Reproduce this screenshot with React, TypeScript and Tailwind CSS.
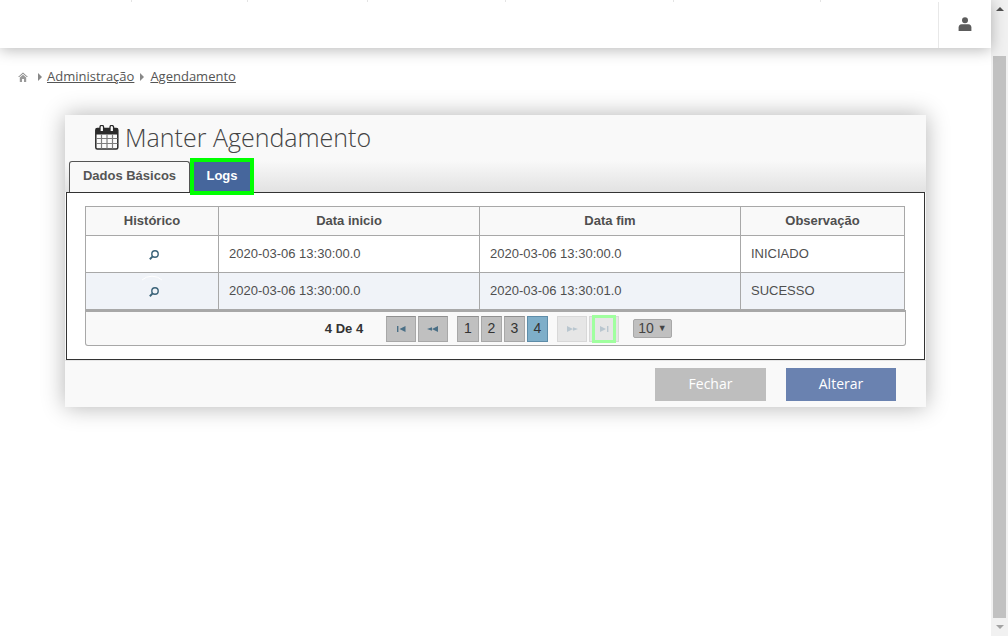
import React from "react";

const arial = "font-['Liberation_Sans',Arial,sans-serif]";
const openSans = "font-['Open_Sans',sans-serif]";

function Lens({ ring }: { ring?: boolean }) {
  return (
    <svg width="30" height="16" viewBox="0 0 30 16" className="block overflow-visible">
      {ring && <path d="M5 1 A15 15 0 0 1 25 1" transform="translate(0 -5)" fill="none" stroke="#ffffff" strokeWidth="1" />}
      <circle cx="18" cy="7" r="3.2" fill="none" stroke="#3b6379" strokeWidth="1.4" />
      <path d="M15.7 9.4 L12.8 12.2" stroke="#3b6379" strokeWidth="1.9" />
    </svg>
  );
}

function PageGlyph({ d, color }: { d: string; color: string }) {
  return (
    <svg width="14" height="8" viewBox="0 0 14 8" className="block">
      <path d={d} fill={color} />
    </svg>
  );
}

const FIRST = "M3 1h1.4v6H3zM11.5 1v6L5.5 4z";
const PREV = "M6 2.2v3.6L1 4zM12 1v6L6 4z";
const NEXT = "M2 1v6l6-3zM8 2.2v3.6L13 4z";
const LAST = "M3 1v6l6-3zM10 1h1.4v6H10z";

function Calendar() {
  return (
    <svg width="24" height="25" viewBox="0 0 24 25" className="block">
      <rect x="0.8" y="3.5" width="22" height="20.5" rx="1.5" fill="#fbfbfb" stroke="#2b2b2b" strokeWidth="1.5" />
      <rect x="1" y="3.5" width="21.6" height="6" fill="#2b2b2b" />
      <path d="M5 6V2.2a1.8 1.8 0 0 1 3.6 0V6" fill="#fbfbfb" stroke="#2b2b2b" strokeWidth="1.3" />
      <path d="M15 6V2.2a1.8 1.8 0 0 1 3.6 0V6" fill="#fbfbfb" stroke="#2b2b2b" strokeWidth="1.3" />
      <path d="M1 13.5h21.5M1 18.5h21.5" stroke="#7d7d7d" strokeWidth="1.2" />
      <path d="M6.5 9.5v14M12 9.5v14M17.5 9.5v14" stroke="#7d7d7d" strokeWidth="1.2" />
    </svg>
  );
}

function Tick({ w }: { w: string }) {
  return <div className={`${w} h-[2px] border-r border-[#e4e4e4]`} />;
}

function PagerButton({ children, w, cls }: { children: React.ReactNode; w: string; cls?: string }) {
  return (
    <div
      className={`${w} h-[26px] flex items-center justify-center border border-[#a8a8a8] border-t-[#8f8f8f] bg-[#c0c0c0] text-[14px] text-[#333] ${cls ?? ""}`}
    >
      {children}
    </div>
  );
}

function Row({ alt, start, end, obs }: { alt?: boolean; start: string; end: string; obs: string }) {
  const td = "border border-[#a8a8a8] px-[10px] pb-[1px] text-[13px] text-[#4f4f4f]";
  return (
    <tr className={`h-[37px] ${alt ? "bg-[#f0f3f8]" : "bg-white"}`}>
      <td className="border border-[#a8a8a8]">
        <div className="flex justify-center pt-[1px]">
          <Lens ring={alt} />
        </div>
      </td>
      <td className={td}>{start}</td>
      <td className={td}>{end}</td>
      <td className={td}>{obs}</td>
    </tr>
  );
}

export default function App() {
  const th = "border border-[#a8a8a8] text-[13px] font-bold text-[#4f4f4f] text-center";
  return (
    <div className="h-[636px] w-[1008px] flex overflow-hidden bg-white">
      <div className="w-[991px] flex flex-col">
        <header className="h-[48px] shrink-0 flex bg-white shadow-[0_2px_14px_rgba(0,0,0,0.28)] relative">
          <div className="flex-1 flex items-start">
            <Tick w="w-[132px]" />
            <Tick w="w-[116px]" />
            <Tick w="w-[120px]" />
            <Tick w="w-[138px]" />
            <Tick w="w-[168px]" />
            <Tick w="w-[147px]" />
          </div>
          <div className="w-[53px] mt-[2px] border-l border-[#e8e8e8] flex items-center justify-center pr-[1px] pb-[2px]">
            <svg width="14" height="14" viewBox="0 0 14 14" className="block">
              <circle cx="7" cy="3.2" r="3" fill="#5c5c5c" />
              <path d="M0.6 14v-3.6Q0.6 7.6 3.6 7.2h6.8q3 .4 3 3.2V14z" fill="#5c5c5c" />
            </svg>
          </div>
        </header>

        <nav className={`mt-[20px] ml-[18px] h-[18px] flex items-center text-[13px] text-[#555] ${openSans}`}>
          <svg width="10" height="10" viewBox="0 0 10 10" className="block">
            <path d="M5 0.5L0 5h1.2L5 1.8 8.8 5H10z" fill="#8a8a8a" />
            <path d="M5 2.8L1.8 5.6V10h2.2V7h2v3h2.2V5.6z" fill="#9a9a9a" />
          </svg>
          <span className="ml-[10px] mr-[5px] w-0 h-0 border-y-[4px] border-y-transparent border-l-[4px] border-l-[#888]" />
          <span className="underline">Administração</span>
          <span className="mx-[6px] w-0 h-0 border-y-[4px] border-y-transparent border-l-[4px] border-l-[#888]" />
          <span className="underline">Agendamento</span>
        </nav>

        <section className="mt-[29px] ml-[65px] w-[861px] h-[292px] flex flex-col bg-[#f9f9f9] shadow-[0_0_22px_rgba(0,0,0,0.3)]">
          <div className="h-[45px] shrink-0 flex items-center pl-[30px]">
            <Calendar />
            <h1 className={`ml-[6px] text-[25px] font-light text-[#444] leading-none ${openSans}`}>Manter Agendamento</h1>
          </div>
          <div className={`h-[32px] shrink-0 flex items-end pl-[4px] bg-gradient-to-b from-[#f9f9f9] to-[#e2e2e2] ${arial}`}>
            <div className="w-[121px] h-[31px] flex items-center justify-center rounded-t-[3px] border border-b-0 border-[#555] bg-[#f9f9f9] text-[13px] font-bold text-[#555] pb-[2px]">
              Dados Básicos
            </div>
            <div className="w-[64px] h-[37px] -mb-[3px] relative z-10 flex items-center justify-center border-[4px] border-[#00ff00] bg-[#46669c] text-[13px] font-bold text-white pb-[1px]">
              Logs
            </div>
          </div>

          <div className={`mx-[1px] h-[168px] shrink-0 border border-[#333] bg-white pt-[13px] pl-[18px] pr-[19px] ${arial}`}>
            <table className="w-[819px] table-fixed border-collapse">
              <colgroup>
                <col className="w-[133px]" />
                <col className="w-[261px]" />
                <col className="w-[261px]" />
                <col className="w-[164px]" />
              </colgroup>
              <thead>
                <tr className="h-[29px] bg-[#f9f9f9]">
                  <th className={th}>Histórico</th>
                  <th className={th}>Data inicio</th>
                  <th className={th}>Data fim</th>
                  <th className={th}>Observação</th>
                </tr>
              </thead>
              <tbody>
                <Row start="2020-03-06 13:30:00.0" end="2020-03-06 13:30:00.0" obs="INICIADO" />
                <Row alt start="2020-03-06 13:30:00.0" end="2020-03-06 13:30:01.0" obs="SUCESSO" />
              </tbody>
            </table>
            <div className="w-[821px] h-[36px] flex items-center border border-t-2 border-[#a8a8a8] rounded-b-[3px] bg-[#f9f9f9]">
              <span className="ml-[238px] w-[40px] text-[13px] font-bold text-[#333] text-center">4 De 4</span>
              <div className="ml-[22px] flex items-center gap-[2px]">
                <PagerButton w="w-[30px]"><PageGlyph d={FIRST} color="#4a6f86" /></PagerButton>
                <PagerButton w="w-[30px]"><PageGlyph d={PREV} color="#4a6f86" /></PagerButton>
                <div className="w-[5px]" />
                <PagerButton w="w-[22px]">1</PagerButton>
                <PagerButton w="w-[21px]">2</PagerButton>
                <PagerButton w="w-[21px]">3</PagerButton>
                <PagerButton w="w-[21px]" cls="!bg-[#7eaec9] !border-[#5d8ca8]">4</PagerButton>
                <div className="w-[5px]" />
                <PagerButton w="w-[30px]" cls="!bg-[#e6e6e6] !border-[#d8d8d8]"><PageGlyph d={NEXT} color="#b9c6cf" /></PagerButton>
                <div className="relative">
                  <PagerButton w="w-[30px]" cls="!bg-[#e6e6e6] !border-[#d8d8d8]"><PageGlyph d={LAST} color="#b9c6cf" /></PagerButton>
                  <div className="absolute -top-[1px] left-[3px] w-[24px] h-[28px] border-[3px] border-[#a0ff9f]" />
                </div>
              </div>
              <div className="ml-[14px] w-[39px] h-[19px] flex items-center justify-center gap-[4px] rounded-[2px] border border-[#a8a8a8] bg-[#c0c0c0] text-[14px] text-[#444]">
                <span>10</span>
                <span className="text-[9px] leading-none">▼</span>
              </div>
            </div>
          </div>

          <div className={`flex-1 flex justify-end items-start pt-[7px] pr-[30px] gap-[20px] border-t border-[#e6e6e6] text-[14px] text-white ${openSans}`}>
            <div className="w-[111px] h-[33px] flex items-center justify-center bg-[#bebebe] pb-[2px]">Fechar</div>
            <div className="w-[110px] h-[33px] flex items-center justify-center bg-[#6a82b0] pb-[2px]">Alterar</div>
          </div>
        </section>
      </div>

      <aside className="w-[17px] h-full flex flex-col items-center bg-[#f1f1f1]">
        <div className="h-[17px] w-full flex items-center justify-center pt-[1px]">
          <span className="w-0 h-0 border-x-[4px] border-x-transparent border-b-[4px] border-b-[#505050]" />
        </div>
        <div className="mt-[39px] h-[562px] w-[13px] bg-[#c1c1c1]" />
        <div className="flex-1 w-full flex items-center justify-center">
          <span className="w-0 h-0 border-x-[4px] border-x-transparent border-t-[4px] border-t-[#a3a3a3]" />
        </div>
      </aside>
    </div>
  );
}
